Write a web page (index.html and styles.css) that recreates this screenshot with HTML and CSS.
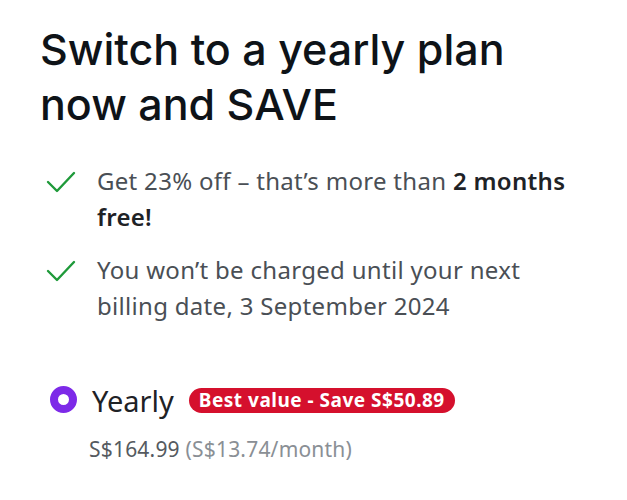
FILE: index.html
```html
<!DOCTYPE html>
<html>
<head>
<meta charset="utf-8">
<link rel="stylesheet" href="styles.css">
</head>
<body>
<main class="panel">
  <h1 class="title">Switch to a yearly plan<br>now and SAVE</h1>
  <ul class="benefits">
    <li class="benefit">
      <svg class="check" viewBox="0 0 30 22" width="30" height="22"><path d="M2 11 L11 20 L28 2" fill="none" stroke="#1f9a3a" stroke-width="2.4" stroke-linecap="round" stroke-linejoin="round"/></svg>
      <span class="benefit-text">Get 23% off – that’s more than <strong>2 months</strong> <strong>free!</strong></span>
    </li>
    <li class="benefit">
      <svg class="check" viewBox="0 0 30 22" width="30" height="22"><path d="M2 11 L11 20 L28 2" fill="none" stroke="#1f9a3a" stroke-width="2.4" stroke-linecap="round" stroke-linejoin="round"/></svg>
      <span class="benefit-text">You won’t be charged until your next billing date, 3 September 2024</span>
    </li>
  </ul>
  <div class="plan">
    <div class="plan-row">
      <span class="radio"></span>
      <span class="plan-name">Yearly</span>
      <span class="badge">Best value - Save S$50.89</span>
    </div>
    <div class="price">S$164.99 <span class="permonth">(S$13.74/month)</span></div>
  </div>
</main>
</body>
</html>
```
FILE: styles.css
```css
html, body {
  margin: 0;
  padding: 0;
  background: #ffffff;
}
.panel {
  padding: 22px 40px 0 40px;
  font-family: "Noto Sans", sans-serif;
}
.title {
  margin: 0;
  font-family: "Inter", sans-serif;
  font-weight: 500;
  font-size: 43px;
  line-height: 55px;
  color: #0e1318;
}
.benefits {
  list-style: none;
  margin: 31px 0 0 0;
  padding: 0 0 0 6px;
  display: flex;
  flex-direction: column;
  gap: 17px;
}
.benefit {
  display: flex;
  gap: 21px;
  font-size: 24px;
  line-height: 36px;
  letter-spacing: 0.3px;
  color: #4a4f55;
}
.benefit-text {
  max-width: 480px;
}
.benefit strong {
  font-weight: 600;
  color: #1e2226;
}
.check {
  flex: none;
  margin-top: 8px;
}
.plan {
  margin-top: 61px;
  padding-left: 10px;
}
.plan-row {
  display: flex;
  align-items: center;
  height: 30px;
}
.radio {
  width: 27px;
  height: 27px;
  box-sizing: border-box;
  border-radius: 50%;
  border: 8.5px solid #7d2ae8;
  background: #fff;
  flex: none;
  margin-top: -2px;
}
.plan-name {
  margin-left: 15px;
  font-size: 29px;
  color: #1e2226;
}
.badge {
  margin-left: 15px;
  background: #d5102d;
  color: #fff;
  font-weight: 700;
  font-size: 19px;
  letter-spacing: 0.5px;
  line-height: 25px;
  padding: 0 10px;
  border-radius: 13px;
}
.price {
  margin-top: 20px;
  padding-left: 39px;
  font-size: 21px;
  letter-spacing: 0.2px;
  color: #555a60;
}
.permonth {
  color: #8a8f95;
}
```
